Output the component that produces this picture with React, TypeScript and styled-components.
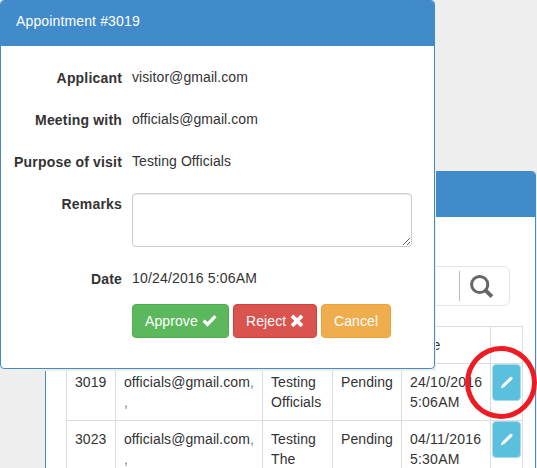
import React from "react";
import styled, { createGlobalStyle } from "styled-components";

const GlobalStyle = createGlobalStyle`
  * { box-sizing: border-box; }
  body {
    margin: 0;
    overflow: hidden;
    background: #eeeeee;
    color: #333;
    font: 14px/20px "Liberation Sans", Arial, sans-serif;
  }
`;

const Page = styled.main`
  position: relative;
  width: 537px;
  height: 468px;
  overflow: hidden;
  padding: 171px 1px 0 45px;
`;

const ListPanel = styled.section`
  height: 340px;
  background: #fff;
  border: 1px solid #428bca;
  border-radius: 4px 4px 0 0;
`;

const ListHeader = styled.header`
  height: 45px;
  background: #428bca;
  border-radius: 3px 3px 0 0;
`;

const SearchBox = styled.div`
  display: flex;
  align-items: center;
  justify-content: flex-end;
  height: 40px;
  margin: 49px 25px 20px 20px;
  border: 1px solid #e4e4e4;
  border-radius: 6px;
`;

const SearchButton = styled.button`
  display: flex;
  align-items: center;
  width: 50px;
  height: 30px;
  padding: 2px 0 0 10px;
  border: 0;
  border-left: 1px solid #bbb;
  background: none;
  color: #666;
`;

const Table = styled.table`
  width: 457px;
  margin-left: 20px;
  table-layout: fixed;
  border-collapse: collapse;
  letter-spacing: 0.08px;
`;

const Col = styled.col<{ $w: number }>`
  width: ${(p) => p.$w}px;
`;

const Cell = styled.td<{ $flush?: boolean; $wide?: boolean }>`
  height: ${(p) => (p.$flush ? "37px" : "auto")};
  padding: ${(p) => (p.$flush ? "0 1px 2px" : "8px")};
  border: 1px solid #ddd;
  vertical-align: top;
  white-space: nowrap;
  letter-spacing: ${(p) => (p.$wide ? "0.22px" : "inherit")};
`;

const Note = styled.span`
  color: #668092;
`;

const EditButton = styled.button`
  display: flex;
  align-items: center;
  justify-content: center;
  width: 29px;
  height: 37px;
  padding: 0;
  border: 1px solid #a5dbea;
  border-radius: 4px;
  background: #5bc0de;
  color: #fff;
`;

const DialogLayer = styled.div`
  position: absolute;
  top: 0;
  left: 0;
  width: 436px;
  height: 371px;
  background: #eeeeee;
`;

const Dialog = styled.section`
  width: 435px;
  height: 369px;
  background: #fff;
  border: 1px solid #428bca;
  border-radius: 4px;
`;

const DialogHeader = styled.header`
  height: 45px;
  padding: 10px 15px;
  background: #428bca;
  border-radius: 3px 3px 0 0;
  color: #fff;
  letter-spacing: 0.14px;
`;

const Form = styled.div`
  display: flex;
  flex-direction: column;
  gap: 15px;
  padding: 15px 22px 15px 0;
`;

const Field = styled.div<{ $tall?: boolean }>`
  display: grid;
  grid-template-columns: 121px 1fr;
  column-gap: 10px;
  height: ${(p) => (p.$tall ? "60px" : "27px")};
`;

const Label = styled.label`
  padding-top: 7px;
  font-weight: bold;
  text-align: right;
  letter-spacing: 0.18px;
`;

const Value = styled.div<{ $wide?: boolean }>`
  padding-top: 6px;
  letter-spacing: ${(p) => (p.$wide ? "0.17px" : "0.08px")};
`;

const Remarks = styled.textarea`
  display: block;
  width: 280px;
  height: 54px;
  margin-top: 6px;
  border: 1px solid #ccc;
  border-radius: 4px;
  box-shadow: inset 0 1px 1px rgba(0, 0, 0, 0.075);
  resize: vertical;
  outline: none;
`;

const Actions = styled.div`
  display: flex;
  gap: 4px;
  padding-left: 131px;
`;

const ActionButton = styled.button<{ $bg: string; $line: string; $w: number }>`
  display: flex;
  align-items: center;
  gap: 4px;
  width: ${(p) => p.$w}px;
  height: 34px;
  padding: 0 12px;
  border: 1px solid ${(p) => p.$line};
  border-radius: 4px;
  background: ${(p) => p.$bg};
  color: #fff;
  font: inherit;
  letter-spacing: 0.1px;
  white-space: nowrap;
`;

const Highlight = styled.div`
  position: absolute;
  left: 465px;
  top: 346px;
  width: 72px;
  height: 73px;
  border: 5px solid #ed1c24;
  border-radius: 50%;
`;

const Glyph = styled.svg`
  display: block;
  flex: none;
  overflow: visible;
`;

const SearchIcon = () => (
  <Glyph width="24" height="24" viewBox="0 0 24 24" fill="none" stroke="currentColor">
    <circle cx="9.7" cy="9.5" r="8.1" strokeWidth="3" />
    <path d="M15.3 15.1 21.9 21.6" strokeWidth="4" />
  </Glyph>
);

const PencilIcon = () => (
  <Glyph width="14" height="14" viewBox="0 0 14 14" fill="currentColor">
    <path d="M9.9 1.2Q11.1.2 12.1 1.2 13.1 2.3 12.1 3.4L4.3 11.1.7 12.6 2 9Z" />
  </Glyph>
);

const CheckIcon = () => (
  <Glyph width="15" height="14" viewBox="0 0 15 14" fill="currentColor">
    <path d="M12.3.9 14.6 3.2 5.5 12.8.4 7.7 2.7 5.4 5.5 8.1Z" />
  </Glyph>
);

const CrossIcon = () => (
  <Glyph width="14" height="14" viewBox="0 0 14 14" fill="none" stroke="currentColor" strokeWidth="3.8">
    <path d="M2 1.8 12 11.8M12 1.8 2 11.8" />
  </Glyph>
);

const details = [
  ["Applicant", "visitor@gmail.com"],
  ["Meeting with", "officials@gmail.com"],
  ["Purpose of visit", "Testing Officials"],
];

const rows = [
  { id: "3019", purpose: ["Testing", "Officials"], date: ["24/10/2016", "5:06AM"] },
  { id: "3023", purpose: ["Testing", "The"], date: ["04/11/2016", "5:30AM"] },
];

const AppointmentList = () => (
  <ListPanel>
    <ListHeader />
    <SearchBox>
      <SearchButton aria-label="Search">
        <SearchIcon />
      </SearchButton>
    </SearchBox>
    <Table>
      <colgroup>
        {[49, 147, 70, 69, 89, 32].map((w, i) => (
          <Col key={i} $w={w} />
        ))}
      </colgroup>
      <tbody>
        <tr>
          <Cell />
          <Cell />
          <Cell />
          <Cell />
          <Cell $wide>Date</Cell>
          <Cell $flush />
        </tr>
        {rows.map((r) => (
          <tr key={r.id}>
            <Cell>{r.id}</Cell>
            <Cell>
              officials@gmail.com<Note>,</Note>
              <br />
              <Note>,</Note>
            </Cell>
            <Cell>
              {r.purpose[0]}
              <br />
              {r.purpose[1]}
            </Cell>
            <Cell>Pending</Cell>
            <Cell $wide>
              {r.date[0]}
              <br />
              {r.date[1]}
            </Cell>
            <Cell $flush>
              <EditButton aria-label="Edit">
                <PencilIcon />
              </EditButton>
            </Cell>
          </tr>
        ))}
      </tbody>
    </Table>
  </ListPanel>
);

const AppointmentDialog = () => (
  <DialogLayer>
    <Dialog>
      <DialogHeader>Appointment #3019</DialogHeader>
      <Form>
        {details.map(([label, value]) => (
          <Field key={label}>
            <Label>{label}</Label>
            <Value>{value}</Value>
          </Field>
        ))}
        <Field $tall>
          <Label>Remarks</Label>
          <Remarks />
        </Field>
        <Field>
          <Label>Date</Label>
          <Value $wide>10/24/2016 5:06AM</Value>
        </Field>
        <Actions>
          <ActionButton $bg="#5cb85c" $line="#4cae4c" $w={97}>
            Approve <CheckIcon />
          </ActionButton>
          <ActionButton $bg="#d9534f" $line="#d43f3a" $w={84}>
            Reject <CrossIcon />
          </ActionButton>
          <ActionButton $bg="#f0ad4e" $line="#eea236" $w={70}>
            Cancel
          </ActionButton>
        </Actions>
      </Form>
    </Dialog>
  </DialogLayer>
);

export default function App() {
  return (
    <>
      <GlobalStyle />
      <Page>
        <AppointmentList />
        <AppointmentDialog />
        <Highlight />
      </Page>
    </>
  );
}
